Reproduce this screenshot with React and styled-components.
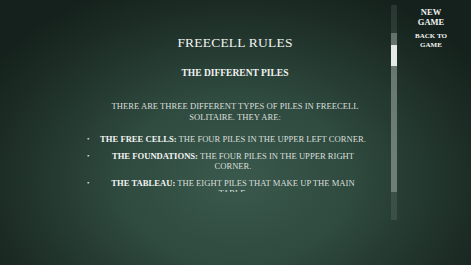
import React from "react";
import styled, { createGlobalStyle } from "styled-components";

const Global = createGlobalStyle`
  html, body { margin: 0; padding: 0; }
  body { background: #17241f; }
`;

const Screen = styled.div`
  width: 471px;
  height: 265px;
  overflow: hidden;
  display: flex;
  background: radial-gradient(ellipse 62% 80% at 50% 68%, #3a594d 0%, #2f4a3f 40%, #1f3129 75%, #15211c 100%);
  font-family: "Liberation Serif", "DejaVu Serif", serif;
  color: #e6ebe7;
`;

const Content = styled.main`
  margin-left: 82px;
  width: 306px;
  height: 192px;
  overflow: hidden;
  display: flex;
  flex-direction: column;
  align-items: center;
  text-transform: uppercase;
`;

const Title = styled.h1`
  margin: 36px 0 0;
  font-size: 13.5px;
  line-height: 14px;
  font-weight: normal;
  letter-spacing: 0.2px;
  color: #f2f4f2;
`;

const Subtitle = styled.h2`
  margin: 18px 0 0;
  font-size: 9.5px;
  line-height: 11px;
  font-weight: bold;
  color: #f0f2f0;
`;

const Para = styled.p`
  margin: 22px 0 0;
  width: 270px;
  font-size: 8.6px;
  line-height: 11px;
  text-align: center;
  color: #d9dfdb;
`;

const List = styled.ul`
  list-style: none;
  margin: 11px 0 0;
  padding: 0;
  width: 100%;
  display: flex;
  flex-direction: column;
  gap: 7px;
`;

const Item = styled.li`
  display: grid;
  grid-template-columns: 16px 270px;
  font-size: 8.6px;
  line-height: 10px;
  color: #d9dfdb;
`;

const Dot = styled.span`
  font-size: 7px;
  padding-left: 5px;
  color: #e8ece9;
`;

const ItemText = styled.span`
  text-align: center;
`;

const Label = styled.b`
  color: #f2f4f2;
`;

const Track = styled.div`
  margin: 5px 0 0 3px;
  width: 6px;
  height: 215px;
  background: rgba(255, 255, 255, 0.09);
  display: flex;
  flex-direction: column;
`;

const Viewport = styled.div`
  margin-top: 28px;
  height: 159px;
  background: rgba(200, 210, 205, 0.36);
  display: flex;
  flex-direction: column;
`;

const Thumb = styled.div`
  margin-top: 12px;
  height: 21px;
  background: rgba(240, 244, 242, 0.92);
`;

const Nav = styled.nav`
  margin-left: 6px;
  width: 56px;
  padding-top: 7px;
  display: flex;
  flex-direction: column;
  align-items: center;
  gap: 5px;
`;

const NavButton = styled.button`
  background: none;
  border: none;
  padding: 0;
  font-family: inherit;
  font-weight: bold;
  font-size: ${(p) => p.$size || 8}px;
  line-height: ${(p) => p.$lh || 10}px;
  text-transform: uppercase;
  color: #f2f4f2;
  text-align: center;
  cursor: pointer;
`;

const items = [
  ["The Free Cells:", "The four piles in the upper left corner."],
  ["The Foundations:", "The four piles in the upper right corner."],
  ["The Tableau:", "The eight piles that make up the main table."],
];

export default function App() {
  return (
    <>
      <Global />
      <Screen>
        <Content>
          <Title>Freecell Rules</Title>
          <Subtitle>The Different Piles</Subtitle>
          <Para>There are three different types of piles in FreeCell Solitaire. They are:</Para>
          <List>
            {items.map(([l, t]) => (
              <Item key={l}>
                <Dot>•</Dot>
                <ItemText>
                  <Label>{l}</Label> {t}
                </ItemText>
              </Item>
            ))}
          </List>
        </Content>
        <Track>
          <Viewport>
            <Thumb />
          </Viewport>
        </Track>
        <Nav>
          <NavButton $size={8.5} $lh={10}>New<br />Game</NavButton>
          <NavButton $size={7} $lh={9}>Back to<br />Game</NavButton>
        </Nav>
      </Screen>
    </>
  );
}
